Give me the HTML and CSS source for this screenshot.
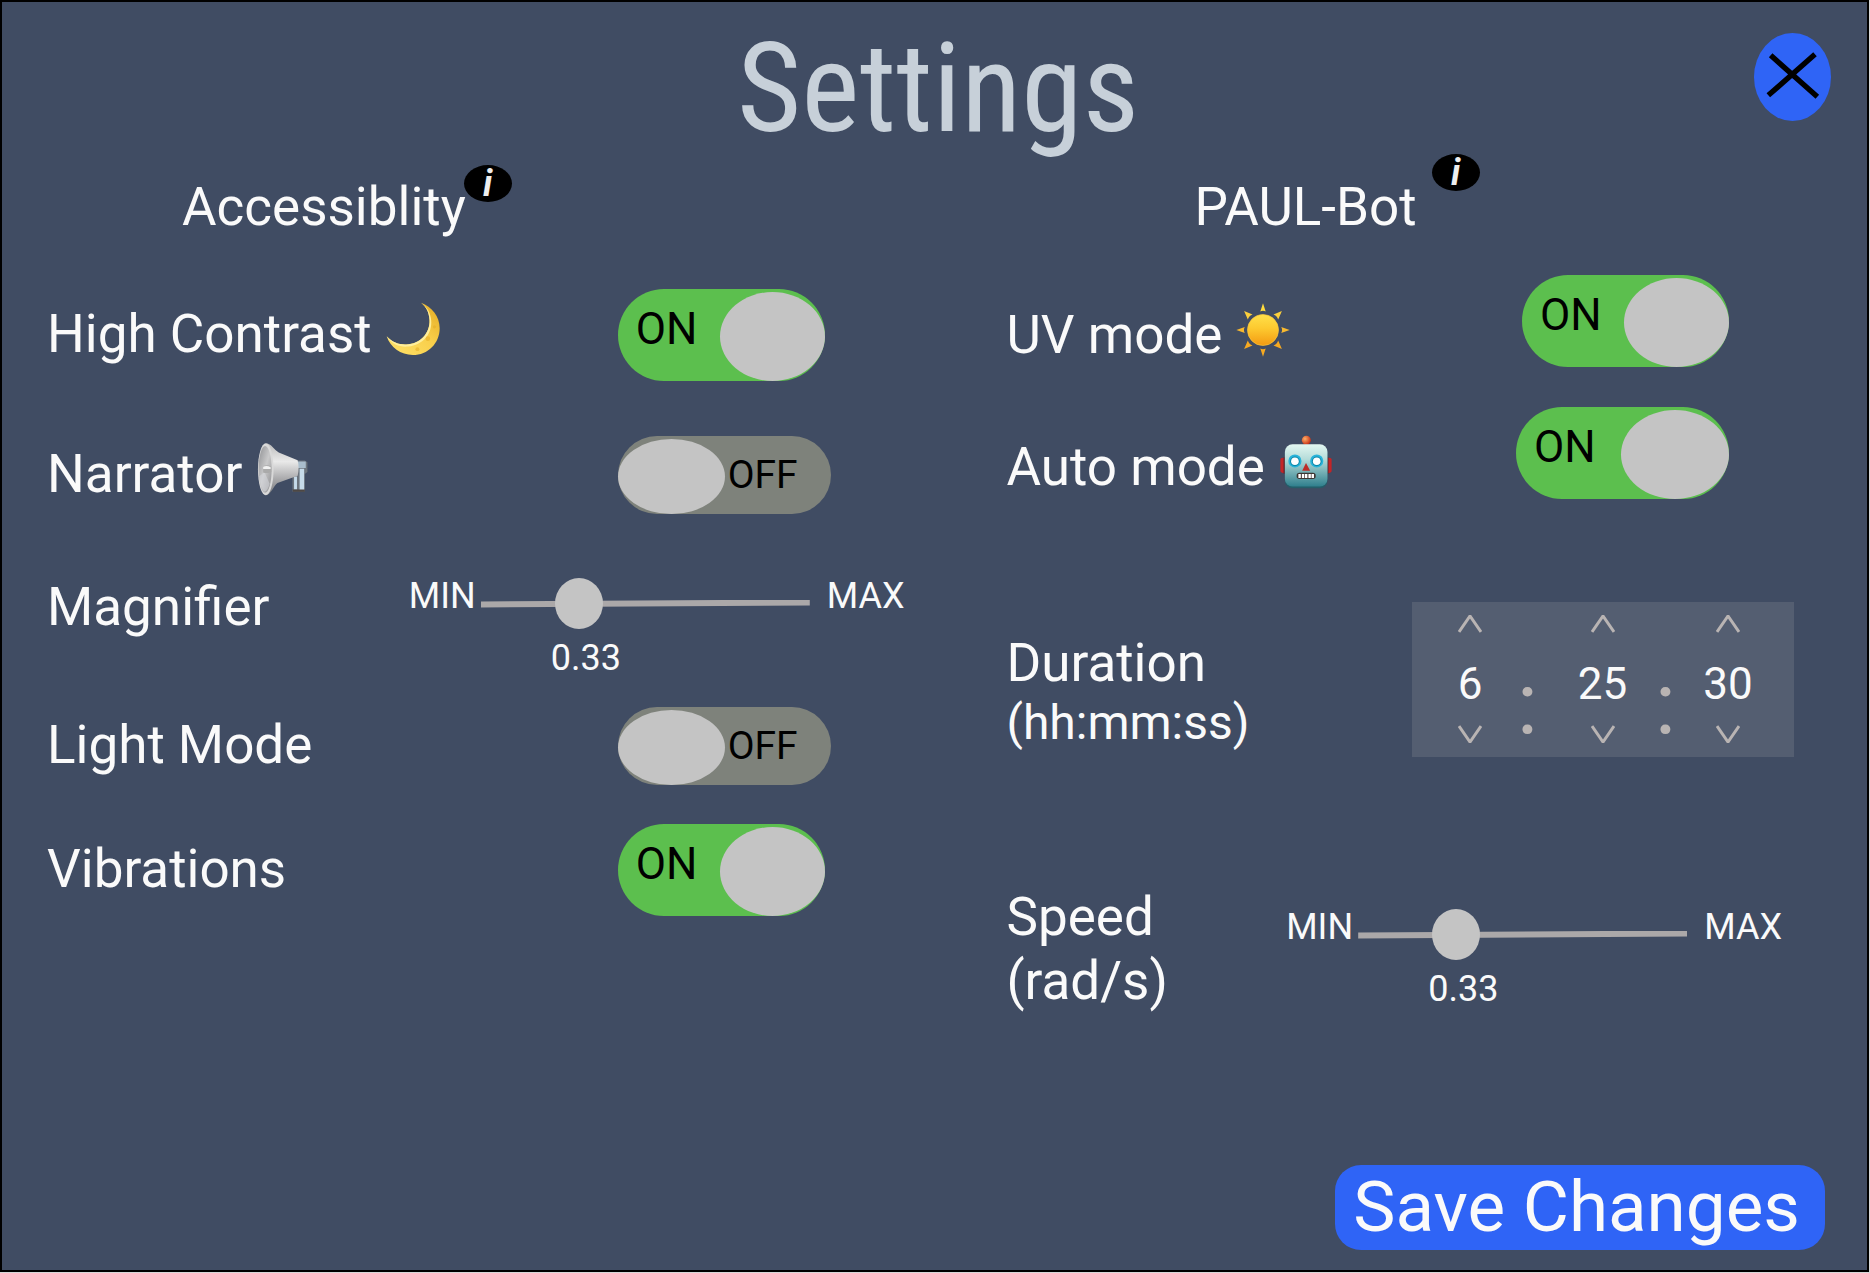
FILE: index.html
```html
<!DOCTYPE html>
<html lang="en">
<head>
<meta charset="utf-8">
<meta name="viewport" content="width=device-width, initial-scale=1">
<title>Settings</title>
<link rel="stylesheet" href="styles.css">
</head>
<body>
<main class="screen">
  <header class="header">
    <h1 class="title">Settings</h1>
    <button class="close" type="button" aria-label="Close">
      <svg viewBox="0 0 231 264" aria-hidden="true"><path d="M50 67 190 191M183 64 43 187" fill="none" stroke="#000" stroke-width="16"/></svg>
    </button>
  </header>

  <div class="panels">
    <section class="panel panel-access">
      <div class="heading heading-access">
        <h2>Accessiblity</h2>
        <button class="info info-low" type="button" aria-label="About accessibility">i</button>
      </div>

      <div class="row row-first">
        <label class="name" for="contrast">High Contrast
          <svg class="emoji" viewBox="0 0 165 165" aria-hidden="true">
            <defs><linearGradient id="moon" x1="0" y1="1" x2="1" y2="0"><stop offset="0" stop-color="#ffe36a"/><stop offset=".55" stop-color="#f9cf4b"/><stop offset="1" stop-color="#e2a920"/></linearGradient></defs>
            <path d="M107 2C140 15 164 43 164 80C164 126 128 162 82 162C45 162 13 139 2 105C20 124 40 131 62 130C105 128 135 95 133 55C132 33 124 15 107 2Z" fill="url(#moon)"/>
            <path d="M107 2C124 15 132 33 133 55C135 95 105 128 62 130C40 131 20 124 2 105C20 133 45 138 68 136C112 132 142 98 138 55C136 33 126 15 107 2Z" fill="#ffef9c"/>
            <circle cx="128" cy="112" r="7" fill="#eebb35"/><circle cx="96" cy="144" r="6" fill="#efbf3a"/><circle cx="148" cy="76" r="5" fill="#eab52e"/>
          </svg>
        </label>
        <div class="toggle toggle-on"><input id="contrast" type="checkbox" role="switch" checked><span class="state">ON</span><span class="knob"></span></div>
      </div>

      <div class="row row-narrator">
        <label class="name" for="narrator">Narrator
          <svg class="emoji" viewBox="0 0 158 166" aria-hidden="true">
            <defs>
              <linearGradient id="horn" x1="0" y1="0" x2="0" y2="1"><stop offset="0" stop-color="#bcbcbc"/><stop offset=".35" stop-color="#e9e9e9"/><stop offset=".7" stop-color="#a7a7a9"/><stop offset="1" stop-color="#77787c"/></linearGradient>
              <linearGradient id="bell" x1="0" y1="0" x2="1" y2="1"><stop offset="0" stop-color="#8f9093"/><stop offset=".5" stop-color="#c9c9ca"/><stop offset="1" stop-color="#8b8b8e"/></linearGradient>
            </defs>
            <path d="M108 100V152H146V98L154 92V62L146 57H122Z" fill="#6c747d"/>
            <path d="M113 106H122V146H113ZM130 82H144V150H130Z" fill="#c6dbea"/>
            <path d="M124 60H149V80H124Z" fill="#a9bdcc"/>
            <path d="M108 146H146V153H110Z" fill="#4d4744"/>
            <path d="M28 4C42 5 52 24 66 32L124 56C128 70 128 88 124 104L62 126C50 134 42 162 27 164Z" fill="url(#horn)"/>
            <ellipse cx="26" cy="84" rx="24" ry="80" fill="#d9d9d9"/>
            <ellipse cx="24" cy="84" rx="20" ry="72" fill="url(#bell)"/>
            <path d="M6 105 22 92 38 128C34 144 26 154 20 152C13 142 8 124 6 105Z" fill="#d5d7dc" opacity=".55"/>
            <path d="M18 74Q32 68 43 76V92Q30 98 18 94Z" fill="#aaa"/>
            <path d="M18 76Q30 71 41 78V83H18Z" fill="#f1f1f1"/>
          </svg>
        </label>
        <div class="toggle toggle-off"><input id="narrator" type="checkbox" role="switch"><span class="knob"></span><span class="state">OFF</span></div>
      </div>

      <div class="row row-slider row-magnifier">
        <label class="name" for="magnifier">Magnifier</label>
        <div class="slider">
          <span class="min">MIN</span>
          <div class="track"><input id="magnifier" type="range" min="0" max="1.25" step="0.01" value="0.33"></div>
          <span class="max">MAX</span>
          <output class="value" for="magnifier">0.33</output>
        </div>
      </div>

      <div class="row row-light">
        <label class="name" for="light">Light Mode</label>
        <div class="toggle toggle-off"><input id="light" type="checkbox" role="switch"><span class="knob"></span><span class="state">OFF</span></div>
      </div>

      <div class="row row-vibrations">
        <label class="name" for="vibrations">Vibrations</label>
        <div class="toggle toggle-on"><input id="vibrations" type="checkbox" role="switch" checked><span class="state">ON</span><span class="knob"></span></div>
      </div>
    </section>

    <section class="panel panel-bot">
      <div class="heading heading-bot">
        <h2>PAUL-Bot</h2>
        <button class="info" type="button" aria-label="About PAUL-Bot">i</button>
      </div>

      <div class="row row-uv">
        <label class="name" for="uv">UV mode
          <svg class="emoji" viewBox="0 0 160 160" aria-hidden="true">
            <defs><linearGradient id="sun" x1="0" y1="0" x2="0" y2="1"><stop offset="0" stop-color="#ffe04a"/><stop offset=".45" stop-color="#fdc92f"/><stop offset="1" stop-color="#f39a12"/></linearGradient></defs>
            <circle cx="80" cy="80" r="46" fill="url(#sun)" stroke="#fbc53a" stroke-width="2"/>
            <path d="M80 1 88 25Q80 21 72 25Z" fill="#ffdb3d"/>
            <path d="M24 24 49 34Q39 37 35 49ZM136 24 125 49Q121 37 111 34Z" fill="#fbcf3c"/>
            <path d="M1 80 26 71Q21 80 26 89ZM159 80 134 71Q139 80 134 89Z" fill="#f8b92f"/>
            <path d="M24 136 35 111Q39 123 49 126ZM136 136 111 126Q121 123 125 111ZM80 159 72 135Q80 139 88 135Z" fill="#f6a921"/>
          </svg>
        </label>
        <div class="toggle toggle-on"><input id="uv" type="checkbox" role="switch" checked><span class="state">ON</span><span class="knob"></span></div>
      </div>

      <div class="row row-auto">
        <label class="name" for="auto">Auto mode
          <svg class="emoji" viewBox="0 0 152 156" aria-hidden="true">
            <defs>
              <linearGradient id="face" x1="0" y1="0" x2="0" y2="1"><stop offset="0" stop-color="#e4f7f1"/><stop offset=".35" stop-color="#b5dcd9"/><stop offset="1" stop-color="#2f7f8d"/></linearGradient>
              <radialGradient id="bulb" cx=".35" cy=".35" r=".7"><stop offset="0" stop-color="#ffb067"/><stop offset="1" stop-color="#c42a12"/></radialGradient>
            </defs>
            <path d="M64 27Q76 18 90 27L92 34H62Z" fill="#5d3140"/>
            <circle cx="77" cy="15" r="13" fill="url(#bulb)"/>
            <path d="M2 70Q3 66 14 66V110Q3 110 2 104ZM150 70Q149 66 138 66V110Q149 110 150 104Z" fill="#c42427"/>
            <path d="M11 64H17V112H11ZM135 64H141V112H135Z" fill="#64262f"/>
            <rect x="15" y="30" width="123" height="124" rx="22" fill="#245d69"/>
            <rect x="15" y="27" width="123" height="122" rx="22" fill="url(#face)"/>
            <g fill="#29b4da"><circle cx="44" cy="75" r="19"/><circle cx="107" cy="75" r="19"/></g>
            <g fill="#0a86a8"><circle cx="44" cy="76" r="14"/><circle cx="107" cy="76" r="14"/></g>
            <g fill="#fff"><circle cx="44" cy="76" r="11"/><circle cx="107" cy="76" r="11"/></g>
            <path d="M76 81 88 103H65Z" fill="#bd2b26"/>
            <rect x="49" y="109" width="55" height="18" rx="8" fill="#3d3633"/>
            <path d="M54 113H61V124H54ZM64 113H71V124H64ZM73 113H80V124H73ZM83 113H90V124H83ZM92 113H99V124H92Z" fill="#fff"/>
          </svg>
        </label>
        <div class="toggle toggle-on toggle-wide"><input id="auto" type="checkbox" role="switch" checked><span class="state">ON</span><span class="knob"></span></div>
      </div>

      <div class="row row-duration">
        <label class="name name-stacked" for="hours">Duration <small>(hh:mm:ss)</small></label>
        <div class="time">
          <div class="unit">
            <button type="button" aria-label="More hours"><svg viewBox="0 0 24 18" aria-hidden="true"><path d="M1 17 12 1 23 17"/></svg></button>
            <input id="hours" type="text" inputmode="numeric" value="6">
            <button type="button" aria-label="Fewer hours"><svg viewBox="0 0 24 18" aria-hidden="true"><path d="M1 1 12 17 23 1"/></svg></button>
          </div>
          <span class="colon">:</span>
          <div class="unit">
            <button type="button" aria-label="More minutes"><svg viewBox="0 0 24 18" aria-hidden="true"><path d="M1 17 12 1 23 17"/></svg></button>
            <input type="text" inputmode="numeric" value="25" aria-label="Minutes">
            <button type="button" aria-label="Fewer minutes"><svg viewBox="0 0 24 18" aria-hidden="true"><path d="M1 1 12 17 23 1"/></svg></button>
          </div>
          <span class="colon">:</span>
          <div class="unit">
            <button type="button" aria-label="More seconds"><svg viewBox="0 0 24 18" aria-hidden="true"><path d="M1 17 12 1 23 17"/></svg></button>
            <input type="text" inputmode="numeric" value="30" aria-label="Seconds">
            <button type="button" aria-label="Fewer seconds"><svg viewBox="0 0 24 18" aria-hidden="true"><path d="M1 1 12 17 23 1"/></svg></button>
          </div>
        </div>
      </div>

      <div class="row row-slider row-speed">
        <label class="name name-stacked" for="speed">Speed <span>(rad/s)</span></label>
        <div class="slider">
          <span class="min">MIN</span>
          <div class="track"><input id="speed" type="range" min="0" max="1.25" step="0.01" value="0.33"></div>
          <span class="max">MAX</span>
          <output class="value" for="speed">0.33</output>
        </div>
      </div>
    </section>
  </div>

  <footer class="footer">
    <button class="save" type="button">Save Changes</button>
  </footer>
</main>
</body>
</html>
```
FILE: styles.css
```css
*, *::before { box-sizing: border-box; }

html { background: #d8d8d8; }

body {
  margin: 0;
  padding: 0 1px 1px 0;
  min-height: 100vh;
  display: flex;
  font-family: Roboto, "Liberation Sans", sans-serif;
  font-size: 53px;
  line-height: 64px;
  color: #fafafa;
}

button, input { font: inherit; color: inherit; margin: 0; padding: 0; border: 0; background: none; }
button { cursor: pointer; }
h1, h2 { margin: 0; font-weight: 400; font-size: inherit; }

.screen {
  flex: 1;
  display: flex;
  flex-direction: column;
  background: #404c63;
  border: 2px solid #000;
}

/* Header */
.header {
  display: grid;
  grid-template-columns: 1fr auto 1fr;
  align-items: start;
  padding: 27px 36px 5px 43px;
}
.title {
  grid-column: 2;
  font-family: "Roboto Condensed", Roboto, "Liberation Sans Narrow", sans-serif;
  font-size: 124px;
  line-height: 120px;
  color: #c7d0d9;
}
.close {
  justify-self: end;
  width: 77px;
  height: 88px;
  margin-top: 4px;
  border-radius: 50%;
  background: #2f64f6;
}
.close svg { display: block; width: 100%; height: 100%; }

/* Panels */
.panels {
  display: grid;
  grid-template-columns: 960fr 820fr;
  padding: 0 41px 0 45px;
}
.heading { display: flex; align-items: flex-start; }
.heading h2 { padding-top: 21px; }
.heading-access { padding-left: 135px; }
.heading-bot { padding-left: 188px; gap: 15px; }
.info {
  width: 48px;
  height: 37px;
  border-radius: 50%;
  background: #000;
  color: #eee;
  font-size: 36px;
  font-weight: 700;
  font-style: italic;
  line-height: 39px;
}
.info-low { margin: 11px 0 0 -2px; }

.row {
  display: grid;
  grid-template-columns: 571fr 389fr;
  align-items: center;
}
.row-slider { grid-template-columns: 362fr 598fr; align-items: start; }
.row-first { margin-top: 50px; }
.row-narrator { margin-top: 55px; }
.row-magnifier { margin-top: 61px; }
.row-light { margin-top: 28px; }
.row-vibrations { margin-top: 39px; }

.panel-bot .row { grid-template-columns: auto auto; justify-content: space-between; align-items: end; }
.row-uv { margin-top: 36px; padding-right: 97px; }
.row-auto { margin-top: 40px; padding-right: 97px; }
.row-duration { margin-top: 103px; padding-right: 32px; }
.row-speed { margin-top: 128px; padding-right: 44px; }

.name { display: flex; gap: 14px; }
.panel-access .name { padding-bottom: 3px; }
.name-stacked { flex-direction: column; gap: 0; }
.name small { font-size: 48px; line-height: 56px; padding-bottom: 6px; }
.emoji { width: 54px; height: 54px; }

/* Switches */
.toggle {
  position: relative;
  display: flex;
  justify-content: space-between;
  color: #000;
}
.toggle input {
  position: absolute;
  inset: 0;
  width: 100%;
  height: 100%;
  opacity: 0;
  cursor: pointer;
}
.knob { border-radius: 50%; background: #c4c4c4; pointer-events: none; }
.toggle-on {
  width: 207px;
  height: 92px;
  padding-top: 3px;
  border-radius: 46px;
  background: #5cbf4e;
}
.toggle-on .knob { width: 105px; }
.toggle-on .state { padding: 11px 0 0 18px; font-size: 44px; line-height: 52px; }
.toggle-wide { width: 213px; }
.toggle-wide .knob { width: 108px; }
.toggle-off {
  width: 213px;
  height: 78px;
  padding-top: 3px;
  border-radius: 39px;
  background: #7e827b;
}
.toggle-off .knob { width: 107px; }
.toggle-off .state { padding: 14px 33px 0 0; font-size: 39px; line-height: 45px; }

/* Sliders */
.slider {
  display: grid;
  grid-template-columns: 72px 329px auto;
  justify-content: start;
  gap: 8px 0;
  font-size: 36px;
  line-height: 42px;
}
.row-speed .slider { padding-bottom: 3px; }
.max { padding-left: 17px; }
.track { display: grid; align-items: center; height: 51px; margin-top: 3px; }
.track::before {
  content: "";
  grid-area: 1 / 1;
  height: 8px;
  background: #aba8a9;
  clip-path: polygon(0 2px, 100% 0, 100% 6px, 0 100%);
}
.track input {
  grid-area: 1 / 1;
  z-index: 1;
  width: 100%;
  height: 51px;
  appearance: none;
  cursor: pointer;
}
.track input::-webkit-slider-thumb {
  appearance: none;
  width: 48px;
  height: 51px;
  border-radius: 50%;
  background: #c4c4c4;
}
.value { grid-column: 2; padding-left: 70px; }

/* Duration */
.time {
  display: grid;
  grid-template-columns: 80px 35px 115px 11px 114px;
  height: 155px;
  padding: 13px 9px 0 18px;
  background: #545e71;
}
.unit { display: flex; flex-direction: column; align-items: center; }
.unit button { width: 24px; height: 18px; }
.unit svg { display: block; width: 24px; height: 18px; fill: none; stroke: #b9b4b3; stroke-width: 3; }
.unit input {
  width: 72px;
  height: 52px;
  margin: 25px 0 15px;
  font-size: 44px;
  line-height: 52px;
  text-align: center;
}
.colon {
  display: flex;
  justify-content: center;
  padding-top: 36px;
  font-size: 88px;
  line-height: 103px;
  color: #b9b4b3;
}

/* Footer */
.footer { display: flex; justify-content: flex-end; margin-top: auto; padding: 0 42px 20px; }
.save {
  padding: 0 25px 2px 18px;
  height: 85px;
  border-radius: 26px;
  background: #2f64f6;
  font-size: 71px;
  line-height: 83px;
}
```
